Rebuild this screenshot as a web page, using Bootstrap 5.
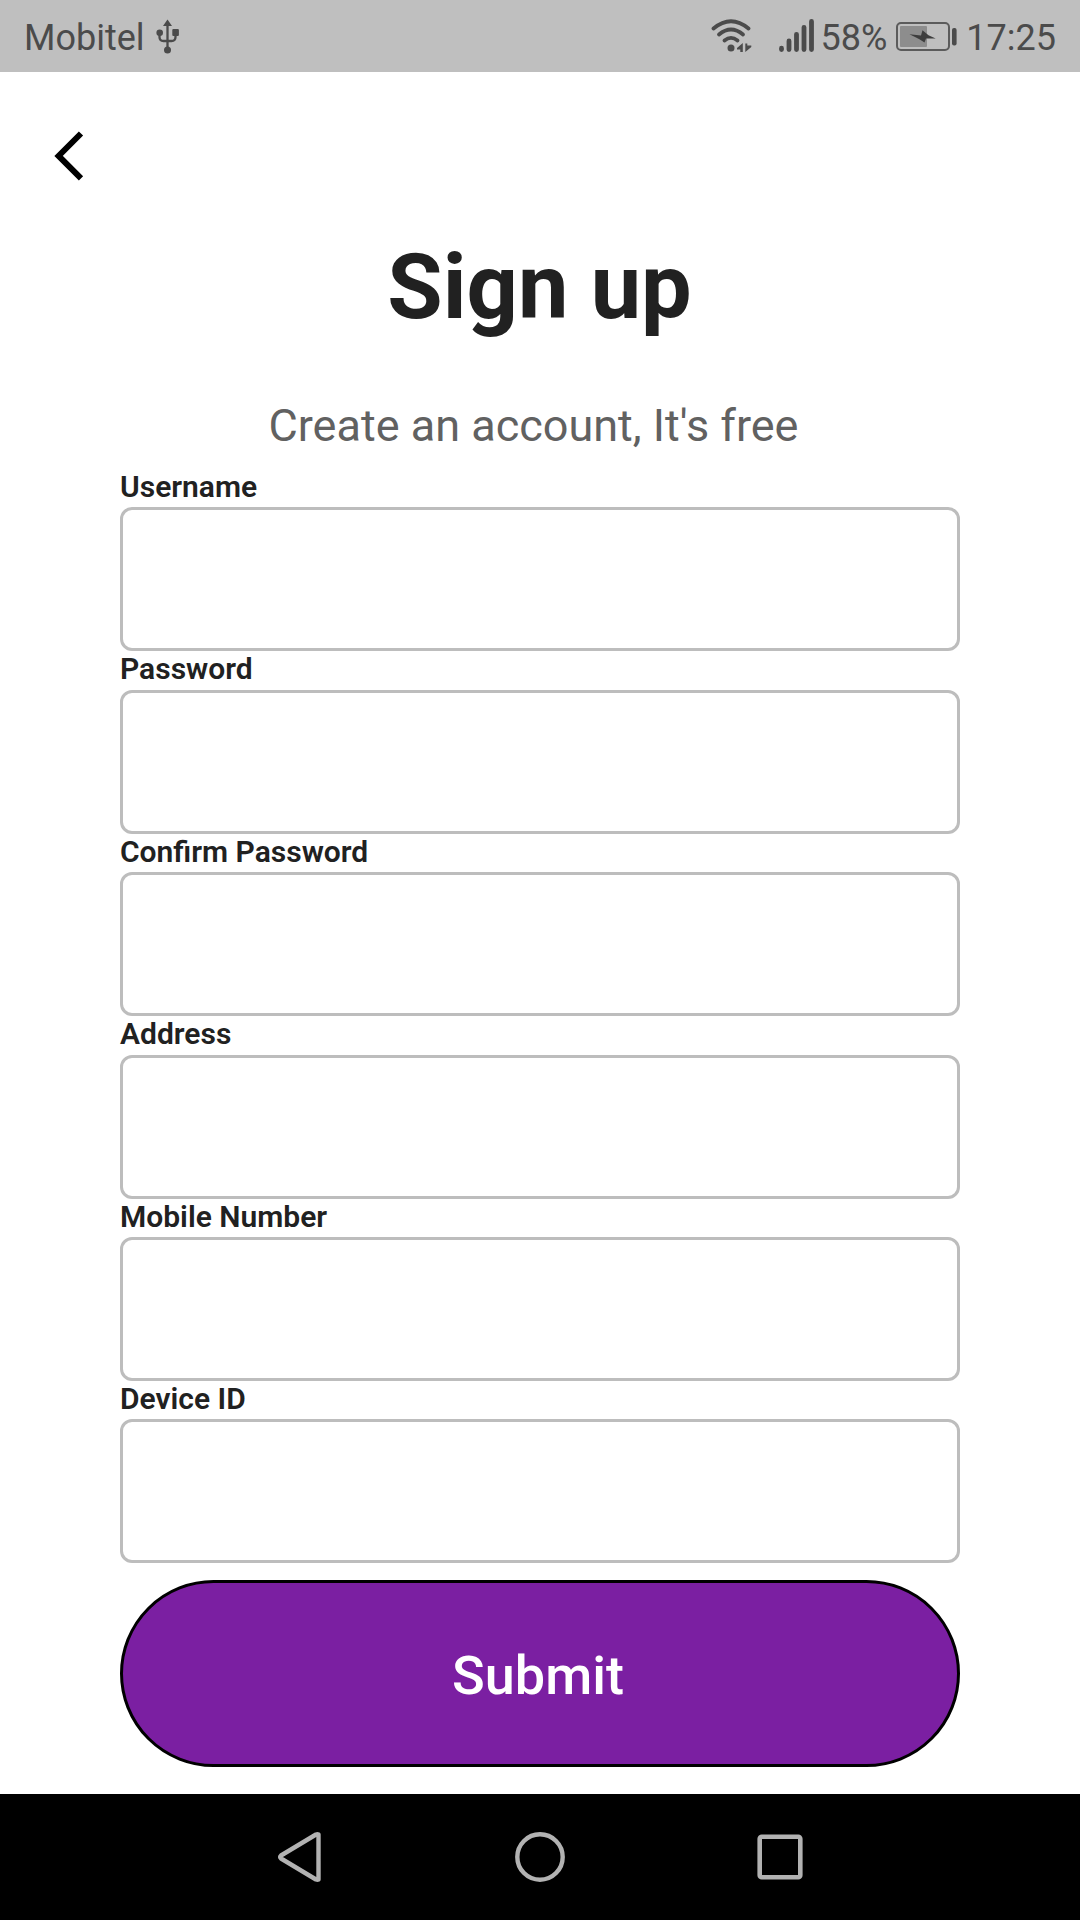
<!DOCTYPE html>
<html lang="en">
<head>
<meta charset="utf-8">
<meta name="viewport" content="width=device-width, initial-scale=1">
<title>Sign up</title>
<link href="https://cdn.jsdelivr.net/npm/bootstrap@5.3.0/dist/css/bootstrap.min.css" rel="stylesheet">
<style>
body { font-family: Roboto, sans-serif; color: #212121; line-height: 1.172; }
.screen { width: 1080px; height: 1920px; }
.status-bar { height: 72px; background: #bfbfbf; color: #4b4b4b; font-size: 36px; padding: 4px 24px 0 24px; }
.status-bar svg, .nav-bar svg, .back-btn svg { display: block; flex: none; }
.usb-icon { margin-left: 9px; }
.signal-icon { margin-right: -1px; }
.battery-icon { margin-left: 3px; }
.back-btn { margin: 47px 0 0 42px; width: 60px; height: 72px; border-radius: 0; }
.form-area { width: 840px; }
.page-title { font-size: 90px; font-weight: 700; line-height: 106px; margin: 44px 0 0 -1px; }
.page-subtitle { font-size: 45px; line-height: 53px; color: #616161; margin: 58px 0 17px -13px; }
.field-label { font-size: 30px; font-weight: 600; line-height: 35px; height: 38.4px; }
.field-box { height: 144px; border: 3px solid #bdbdbd; border-radius: 12px; font-size: 48px; }
.submit-btn { height: 186.5px; margin-top: 17px; background: #7b1fa2; border: 3px solid #000; font-size: 54px; font-weight: 500; color: #fff; }
.submit-btn:hover { background: #6a1b9a; color: #fff; }
.nav-bar { height: 126px; gap: 186px; }
</style>
</head>
<body>
<div class="screen d-flex flex-column bg-white overflow-hidden">
  <header class="status-bar d-flex align-items-center flex-shrink-0">
    <span>Mobitel</span>
    <svg class="usb-icon" width="28" height="40" viewBox="154 18 28 40" fill="#4b4b4b">
      <path d="M167.500 19.500L172 26H163z"/><path d="M167.500 25V48M159.500 34v3q0 4 4 4h8q4 0 4-4v-3" fill="none" stroke="#4b4b4b" stroke-width="2.300"/>
      <circle cx="159.700" cy="32.700" r="3.300"/><rect x="172.300" y="29" width="6.600" height="7" rx="1"/><circle cx="167.500" cy="50" r="3.500"/>
    </svg>
    <div class="d-flex align-items-center ms-auto">
      <svg width="44" height="40" viewBox="710 18 44 40" fill="#4b4b4b">
        <g fill="none" stroke="#4b4b4b" stroke-width="3.800" stroke-linecap="round"><path d="M713.500 28.500Q731 14 748.500 28.500"/><path d="M719 34.500Q731 24.500 743 34.500"/><path d="M724.500 40.500Q731 35.300 737.500 40.500"/></g>
        <circle cx="731" cy="48" r="3.500"/><path d="M742.800 43V52H740.300V49.500H737V48zM745.300 52V43.500H747.300V45.500H751.300V47z"/>
      </svg>
      <svg class="signal-icon" width="68" height="40" viewBox="754 18 68 40" fill="none" stroke="#4b4b4b" stroke-width="4.800" stroke-linecap="round">
        <path d="M781.500 48.200v1.400M789 41v8.600M796.500 34.300v15.300M804 27.300v22.300M811.500 21.400v28.200"/>
      </svg>
      <span>58%</span>
      <svg class="battery-icon" width="76" height="40" viewBox="890 18 76 40">
        <rect x="897" y="23" width="52" height="27" rx="4" fill="none" stroke="#5b5b5b" stroke-width="2"/><rect x="900" y="26" width="27" height="21" rx="1" fill="#8d8d8d"/>
        <path d="M909.500 34.300L921 35.500L922.500 30.200L928.500 35.300L935.700 38.500L926 38.500L924.500 42.500L919 39z" fill="#3d3d3d"/><rect x="952" y="28" width="4.600" height="17.500" rx="2" fill="#4b4b4b"/>
      </svg>
      <span>17:25</span>
    </div>
  </header>

  <main class="flex-grow-1 d-flex flex-column">
    <button class="back-btn btn border-0 p-0" type="button" aria-label="Back">
      <svg width="60" height="72" viewBox="42 119 60 72" fill="none" stroke="#000" stroke-width="6"><path d="M81 133.500L58.600 155.900L81 178.300"/></svg>
    </button>
    <form class="form-area mx-auto">
      <h1 class="page-title text-center">Sign up</h1>
      <p class="page-subtitle text-center">Create an account, It's free</p>
      <label class="field-label d-block" for="username">Username</label>
      <input class="field-box form-control" id="username" type="text">
      <label class="field-label d-block" for="password">Password</label>
      <input class="field-box form-control" id="password" type="password">
      <label class="field-label d-block" for="confirm">Confirm Password</label>
      <input class="field-box form-control" id="confirm" type="password">
      <label class="field-label d-block" for="address">Address</label>
      <input class="field-box form-control" id="address" type="text">
      <label class="field-label d-block" for="mobile">Mobile Number</label>
      <input class="field-box form-control" id="mobile" type="tel">
      <label class="field-label d-block" for="device">Device ID</label>
      <input class="field-box form-control" id="device" type="text">
      <button class="submit-btn btn rounded-pill w-100 pt-1 pb-0 ps-0 pe-1" type="button">Submit</button>
    </form>
  </main>

  <nav class="nav-bar bg-black d-flex justify-content-center align-items-center flex-shrink-0">
    <svg width="54" height="54" viewBox="273 1830 54 54" fill="none" stroke="#b2b2b2" stroke-width="4.400" stroke-linejoin="round"><path d="M318.500 1834.500V1879.500Q317.500 1880 316 1879.500L281 1858.500Q279.500 1857 281 1855.500L316 1834.500Q317.500 1834 318.500 1834.500z"/></svg>
    <svg width="54" height="54" viewBox="513 1830 54 54" fill="none" stroke="#b2b2b2" stroke-width="4.400"><circle cx="540" cy="1857" r="22.700"/></svg>
    <svg width="54" height="54" viewBox="753 1830 54 54" fill="none" stroke="#b2b2b2" stroke-width="4.600"><rect x="759.700" y="1836.700" width="40.600" height="40.600" rx="2"/></svg>
  </nav>
</div>
<script src="https://cdn.jsdelivr.net/npm/bootstrap@5.3.0/dist/js/bootstrap.bundle.min.js"></script>
</body>
</html>
